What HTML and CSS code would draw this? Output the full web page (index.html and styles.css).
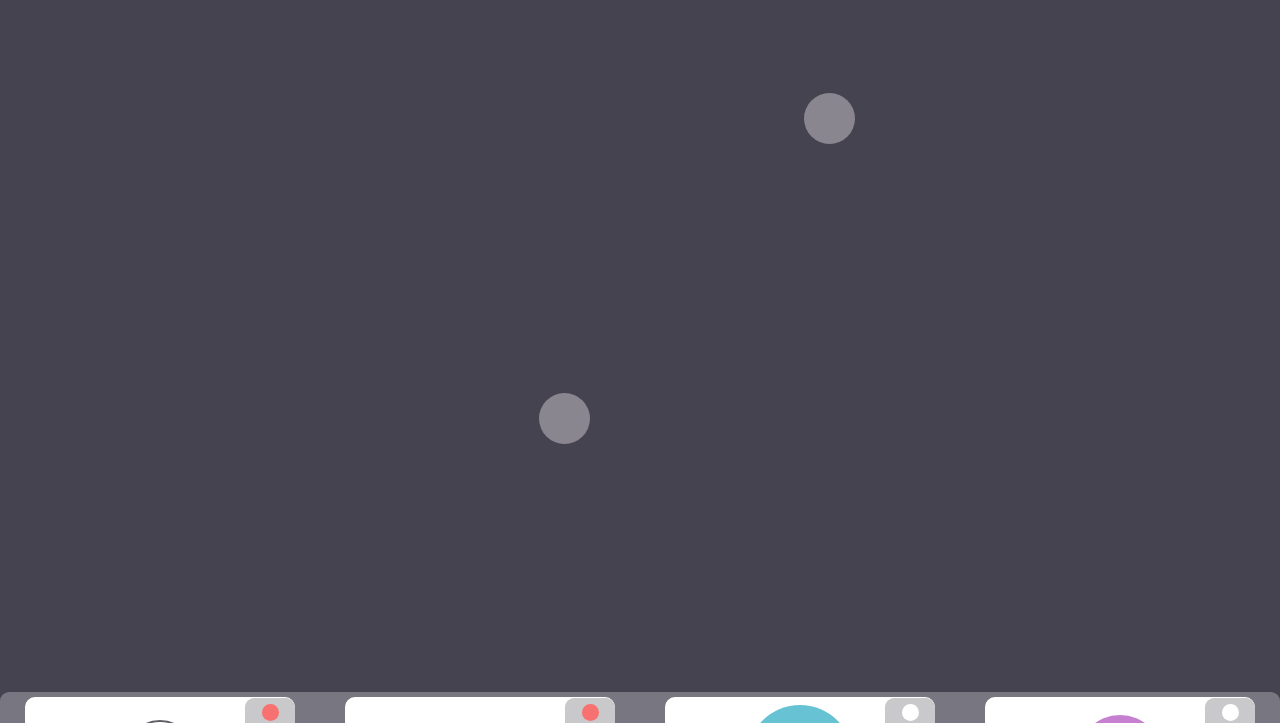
FILE: index.html
```html
<!DOCTYPE html>
<html lang="en">
<head>
<meta charset="utf-8">
<title>Canvas</title>
<link rel="stylesheet" href="styles.css">
</head>
<body>
<div class="app">
  <div class="canvas">
    <span class="dot dot-a"></span>
    <span class="dot dot-b"></span>
  </div>
  <div class="tray">
    <div class="card">
      <div class="card-body pad-23"><span class="ring"></span></div>
      <div class="tab"><span class="light light-red"></span></div>
    </div>
    <div class="card">
      <div class="card-body"></div>
      <div class="tab"><span class="light light-red"></span></div>
    </div>
    <div class="card">
      <div class="card-body pad-8"><span class="disc disc-teal"></span></div>
      <div class="tab"><span class="light light-white"></span></div>
    </div>
    <div class="card">
      <div class="card-body pad-18"><span class="disc disc-purple"></span></div>
      <div class="tab"><span class="light light-white"></span></div>
    </div>
  </div>
</div>
</body>
</html>
```

FILE: styles.css
```css
html, body {
  margin: 0;
  padding: 0;
  height: 723px;
  overflow: hidden;
  background: #45434f;
  font-family: "Liberation Sans", Arial, sans-serif;
}
.app {
  display: flex;
  flex-direction: column;
  width: 1280px;
  height: 723px;
  overflow: hidden;
}
.canvas {
  position: relative;
  height: 692px;
  flex: 0 0 692px;
}
.dot {
  position: absolute;
  width: 51px;
  height: 51px;
  border-radius: 50%;
  background: #8a8690;
}
.dot-a { left: 804px; top: 93px; }
.dot-b { left: 539px; top: 393px; }
.tray {
  flex: 0 0 200px;
  background: #787680;
  border-radius: 9px 9px 0 0;
  display: flex;
  gap: 50px;
  padding: 5px 25px 0;
}
.card {
  position: relative;
  width: 270px;
  height: 150px;
  background: #ffffff;
  border-radius: 10px;
  overflow: hidden;
}
.card-body {
  display: flex;
  justify-content: center;
}
.pad-8 { padding-top: 8px; }
.pad-18 { padding-top: 18px; }
.pad-23 { padding-top: 23px; }
.ring {
  width: 66px;
  height: 66px;
  border-radius: 50%;
  border: 2px solid #5f5e66;
}
.disc {
  border-radius: 50%;
}
.disc-teal {
  width: 106px;
  height: 106px;
  background: #67c3d3;
}
.disc-purple {
  width: 86px;
  height: 86px;
  background: #c77fd0;
}
.tab {
  position: absolute;
  top: 1px;
  right: 0;
  width: 50px;
  height: 44px;
  background: #c9c8ca;
  border-radius: 9px;
  display: flex;
  justify-content: center;
  padding-top: 6px;
  box-sizing: border-box;
}
.light {
  width: 17px;
  height: 17px;
  border-radius: 50%;
}
.light-red { background: #f77170; }
.light-white { background: #ffffff; }
```
